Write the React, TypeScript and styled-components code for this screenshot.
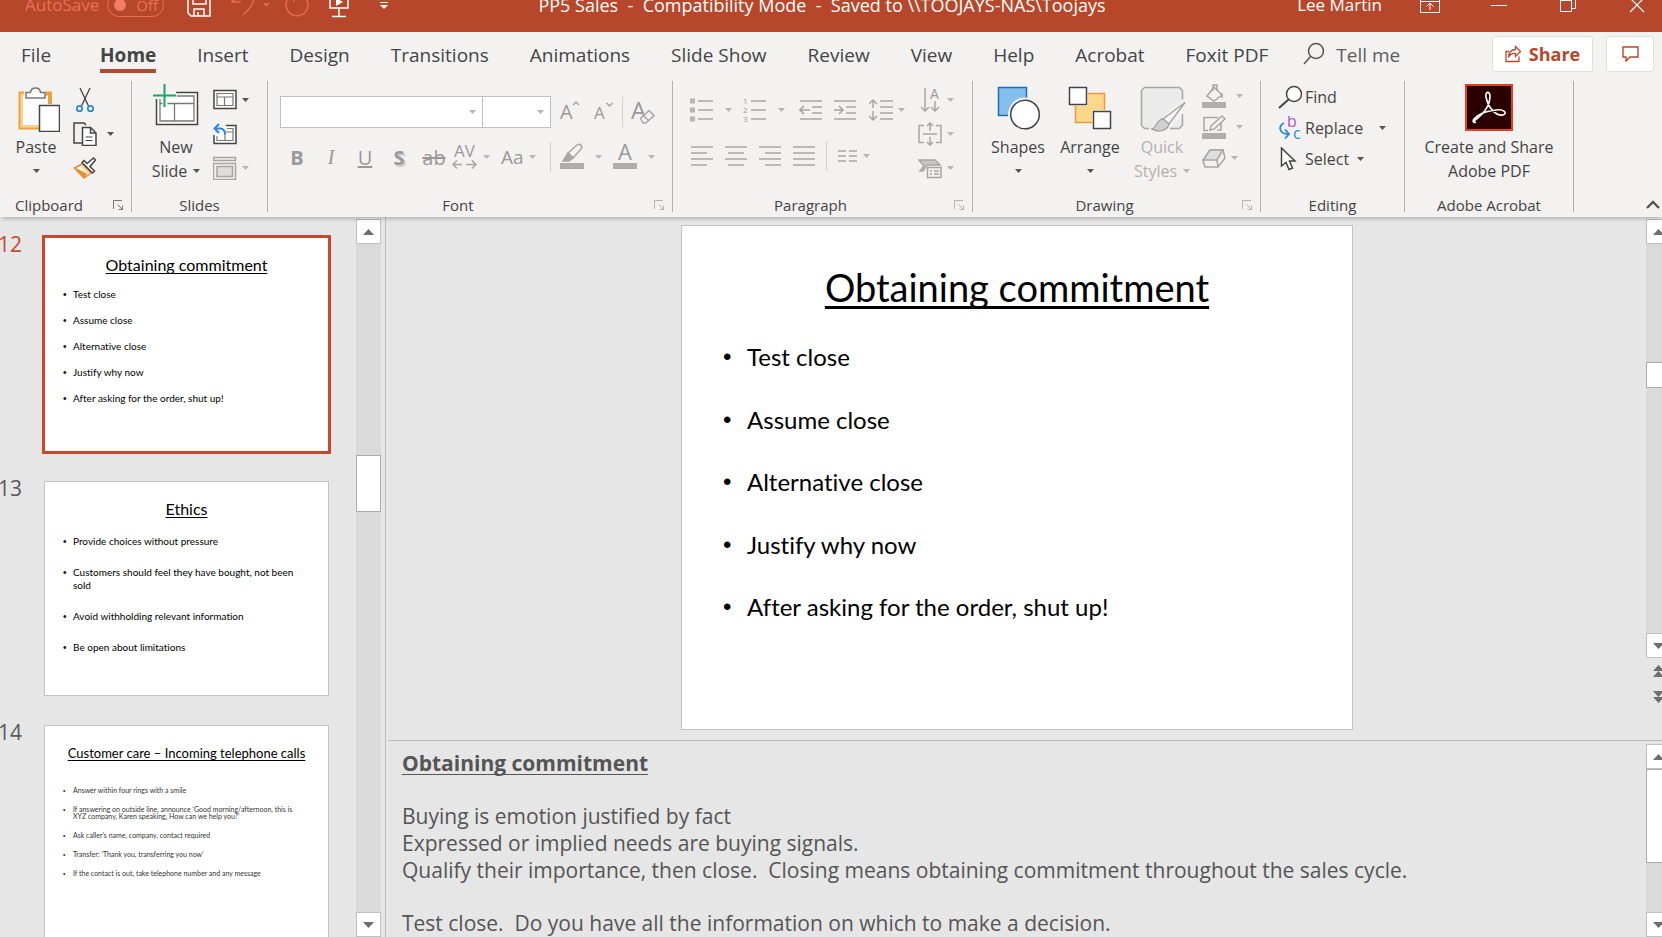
import React from 'react';
import styled, { createGlobalStyle, css } from 'styled-components';

const ui = '"Open Sans", "Noto Sans", sans-serif';
const slideFont = 'Lato, "Open Sans", sans-serif';
const brand = '#b7472a';
const ink = '#444444';
const dim = '#a6a6a6';

const GlobalStyle = createGlobalStyle`
  *, *::before, *::after { box-sizing: border-box; }
  body { margin: 0; font-family: ${ui}; color: ${ink}; background: #e6e6e6; }
  button, input, select { font: inherit; color: inherit; }
  button { border: 0; padding: 0; background: none; cursor: pointer; }
  button:disabled { cursor: default; }
  svg { display: block; flex: none; }
  h1, h2, p, ul { margin: 0; padding: 0; }
`;

const Window = styled.div`
  display: flex;
  flex-direction: column;
  height: 100vh;
  overflow: hidden;
`;

/* ---------- title bar ---------- */

const TitleBar = styled.header`
  display: flex;
  align-items: flex-end;
  height: 32px;
  overflow: hidden;
  background: ${brand};
  color: #fff;
`;

const TitleRow = styled.div`
  flex: 1;
  display: grid;
  grid-template-columns: 1fr auto 1fr;
  align-items: center;
  height: 54px;
  line-height: 24px;
`;

const QuickAccess = styled.div`
  display: flex;
  align-items: center;
  padding-left: 25px;
`;

const AutoSave = styled.label`
  display: flex;
  align-items: center;
  gap: 8px;
  margin-right: 23px;
  font-size: 17px;
  color: #e8705a;
`;

const Toggle = styled.span`
  display: flex;
  align-items: center;
  gap: 10px;
  width: 57px;
  height: 24px;
  padding-left: 6px;
  border: 1px solid #e8705a;
  border-radius: 12px;
  font-size: 15px;
`;

const ToggleInput = styled.input`
  appearance: none;
  width: 12px;
  height: 12px;
  margin: 0;
  border-radius: 50%;
  background: #f47c66;
`;

const BarButton = styled.button<{ $gap?: number }>`
  display: flex;
  align-items: center;
  justify-content: center;
  gap: 8px;
  height: 32px;
  margin-right: ${(p) => p.$gap ?? 0}px;
`;

const DocTitle = styled.h1`
  padding-right: 18px;
  font-size: 18px;
  font-weight: 400;
  white-space: pre;
`;

const WindowControls = styled.div`
  display: flex;
  align-items: center;
  justify-content: flex-end;
  padding-right: 17px;
  font-size: 17px;
`;

/* ---------- tabs ---------- */

const TabBar = styled.nav`
  display: flex;
  align-items: center;
  height: 44px;
  padding: 0 8px 0 21px;
  background: #f3f2f1;
`;

const Tabs = styled.div`
  display: flex;
  gap: 41px;
  font-size: 19px;
  line-height: 26px;
`;

const Tab = styled.button<{ $active?: boolean }>`
  height: 38px;
  border-bottom: 4px solid transparent;
  padding-top: 5px;
  white-space: nowrap;
  ${(p) =>
    p.$active &&
    css`
      border-color: ${brand};
      font-weight: 700;
    `}
`;

const FirstTab = styled(Tab)`
  margin-right: 8px;
`;

const TellMe = styled.label`
  display: flex;
  align-items: center;
  gap: 11px;
  margin-left: 35px;
  flex: 1;
`;

const TellMeInput = styled.input`
  width: 90px;
  border: 0;
  padding: 2px 0 0;
  background: transparent;
  font-size: 19px;
  outline: none;
  &::placeholder { color: #5c5c5c; opacity: 1; }
`;

const TabActions = styled.div`
  display: flex;
  gap: 13px;
`;

const ActionButton = styled.button<{ $w: number }>`
  display: flex;
  align-items: center;
  justify-content: center;
  gap: 7px;
  width: ${(p) => p.$w}px;
  height: 36px;
  border: 1px solid #e1dfdd;
  border-radius: 3px;
  background: #fff;
  color: ${brand};
  font-size: 18px;
  font-weight: 700;
`;

/* ---------- ribbon ---------- */

const Ribbon = styled.section`
  position: relative;
  z-index: 1;
  display: flex;
  height: 141px;
  padding: 5px 0;
  background: #f3f2f1;
  box-shadow: 0 4px 4px -2px rgba(0, 0, 0, 0.22);
`;

const Group = styled.section<{ $w: number }>`
  display: flex;
  flex-direction: column;
  flex: none;
  width: ${(p) => p.$w}px;
  border-right: 1px solid #b3b0ad;
`;

const GroupBody = styled.div<{ $left?: number; $center?: boolean }>`
  display: flex;
  flex: 1;
  min-height: 0;
  padding-left: ${(p) => p.$left ?? 0}px;
  justify-content: ${(p) => (p.$center ? 'center' : 'flex-start')};
`;

const GroupFooter = styled.div`
  display: flex;
  align-items: center;
  height: 14px;
`;

const GroupLabel = styled.h2`
  flex: 1;
  text-align: center;
  font-size: 15px;
  font-weight: 400;
  line-height: 14px;
`;

const LauncherButton = styled.button<{ $w: number }>`
  width: ${(p) => p.$w}px;
  display: flex;
  justify-content: flex-end;
  padding-right: 7px;
`;

const BigButton = styled.button<{ $w: number }>`
  display: flex;
  flex-direction: column;
  align-items: center;
  width: ${(p) => p.$w}px;
  padding-top: 3px;
  font-size: 16px;
  line-height: 24px;
  white-space: nowrap;
  &:disabled { color: #b3b0ad; }
`;

const BigIcon = styled.span`
  margin-bottom: 3px;
`;

const CaretLine = styled.span`
  display: flex;
  align-items: center;
  justify-content: center;
  gap: 6px;
  height: 24px;
`;

const SmallColumn = styled.div<{ $left: number; $top: number; $gap: number }>`
  display: flex;
  flex-direction: column;
  gap: ${(p) => p.$gap}px;
  margin-left: ${(p) => p.$left}px;
  padding-top: ${(p) => p.$top}px;
`;

const SmallButton = styled.button<{ $gap?: number }>`
  display: flex;
  align-items: center;
  gap: ${(p) => p.$gap ?? 5}px;
  height: 24px;
`;

const ToolRows = styled.div<{ $top: number; $gap: number }>`
  display: flex;
  flex-direction: column;
  gap: ${(p) => p.$gap}px;
  padding-top: ${(p) => p.$top}px;
`;

const ToolRow = styled.div`
  display: flex;
  align-items: center;
  height: 32px;
`;

const Tool = styled.button<{ $w: number }>`
  display: flex;
  align-items: center;
  justify-content: flex-start;
  width: ${(p) => p.$w}px;
  height: 32px;
  gap: 11px;
`;

const LetterTool = styled(Tool)`
  justify-content: center;
  font-size: 20px;
  color: #999;
`;

const TightTool = styled(Tool)`
  gap: 5px;
`;

const CaseTool = styled(TightTool)`
  font-size: 19px;
  color: #999;
`;

const FontSizeTools = styled.div`
  display: flex;
  padding-left: 9px;
`;

const SerifItalic = styled.i`
  font-family: "Liberation Serif", serif;
`;

const Shadowed = styled.b`
  text-shadow: 2px 2px 1px #ccc;
`;

const Spacer = styled.span`
  width: 11px;
`;

const Divider = styled.span<{ $gap: number }>`
  width: 1px;
  height: 30px;
  margin: 0 ${(p) => p.$gap}px;
  background: #d2d0ce;
`;

const SelectBox = styled.label<{ $w: number }>`
  display: flex;
  align-items: center;
  width: ${(p) => p.$w}px;
  height: 32px;
  padding-right: 6px;
  border: 1px solid #c0c0c0;
  background: #fff;
  & + & { margin-left: -1px; }
`;

const Select = styled.select`
  appearance: none;
  flex: 1;
  min-width: 0;
  height: 28px;
  border: 0;
  background: transparent;
`;

const EditButton = styled.button`
  display: flex;
  align-items: center;
  gap: 3px;
  height: 31px;
  font-size: 16px;
`;

const EditCaret = styled.span<{ $left: number }>`
  margin-left: ${(p) => p.$left}px;
`;

const CollapseButton = styled.button`
  margin-left: auto;
  align-self: flex-end;
  padding: 0 2px 3px 0;
`;

/* ---------- workspace ---------- */

const Workspace = styled.main`
  display: flex;
  flex: 1;
  min-height: 0;
`;

const ThumbPane = styled.aside`
  display: flex;
  justify-content: space-between;
  width: 386px;
  padding-right: 4px;
  border-right: 1px solid #bdbdbd;
`;

const ThumbList = styled.ul`
  display: flex;
  flex-direction: column;
  gap: 29px;
  padding-top: 20px;
  overflow: hidden;
  width: 340px;
  list-style: none;
`;

const ThumbItem = styled.li<{ $selected?: boolean }>`
  display: grid;
  grid-template-columns: 44px 285px;
  font-size: 21px;
  line-height: 14px;
  color: ${(p) => (p.$selected ? '#c8472f' : '#5a5a5a')};
`;

const ThumbNumber = styled.span`
  width: 22px;
  direction: rtl;
`;

const Thumb = styled.article<{ $selected?: boolean }>`
  height: 215px;
  padding: 16px 14px 0;
  border: 1px solid #c2c2c2;
  background: #fff;
  color: #000;
  font-family: ${slideFont};
  font-variant-ligatures: none;
  ${(p) =>
    p.$selected &&
    css`
      outline: 3px solid #c8472f;
      outline-offset: -1px;
    `}
`;

const ThumbTitle = styled.h2<{ $small?: boolean }>`
  text-align: center;
  white-space: nowrap;
  font-weight: 400;
  font-size: ${(p) => (p.$small ? 13 : 16)}px;
  line-height: 22px;
  text-decoration: underline;
  text-decoration-thickness: 1px;
  text-underline-offset: 2px;
  text-decoration-skip-ink: none;
`;

const ThumbBullets = styled.ul<{ $small?: boolean; $gap: number; $top: number }>`
  display: flex;
  flex-direction: column;
  gap: ${(p) => p.$gap}px;
  padding-top: ${(p) => p.$top}px;
  list-style: none;
  font-size: ${(p) => (p.$small ? 7 : 10)}px;
  line-height: ${(p) => (p.$small ? 7 : 13)}px;
  color: ${(p) => (p.$small ? '#333' : '#000')};
`;

const Bullet = styled.li<{ $indent: number; $lead?: number }>`
  display: grid;
  grid-template-columns: ${(p) => p.$indent}px 1fr;
  padding-left: ${(p) => p.$lead ?? 0}px;
  white-space: pre-line;
  &::before {
    content: '•';
    font-family: "Liberation Sans", sans-serif;
  }
`;

const ScrollBar = styled.div<{ $top?: number }>`
  display: flex;
  flex-direction: column;
  flex: none;
  width: 25px;
  padding-top: ${(p) => p.$top ?? 2}px;
`;

const ScrollButton = styled.button`
  display: flex;
  align-items: center;
  justify-content: center;
  flex: none;
  height: 25px;
  border: 1px solid #c0c0c0;
  background: #fff;
`;

const Track = styled.div<{ $before: number }>`
  flex: 1;
  min-height: 0;
  padding-top: ${(p) => p.$before}px;
  background: #dadada;
`;

const Handle = styled.div<{ $h: number }>`
  height: ${(p) => p.$h}px;
  border: 1px solid #ababab;
  background: #fff;
`;

const JumpButton = styled.button`
  display: flex;
  align-items: center;
  justify-content: center;
  height: 26px;
`;

const JumpGroup = styled.div`
  display: flex;
  flex-direction: column;
  padding-bottom: 30px;
`;

const Editor = styled.section`
  display: flex;
  flex-direction: column;
  flex: 1;
  min-width: 0;
  padding-left: 2px;
`;

const Pane = styled.div`
  display: grid;
  grid-template-columns: 1fr 16px;
  overflow: hidden;
`;

const NotesPane = styled(Pane)`
  flex: 1;
  min-height: 0;
  border-top: 1px solid #b8b8b8;
`;

const Canvas = styled.div`
  display: flex;
  justify-content: center;
  padding: 8px 0 10px;
`;

const Clip = styled.div`
  display: flex;
  overflow: hidden;
  min-height: 0;
`;

const Slide = styled.article`
  width: 672px;
  height: 505px;
  padding: 37px 41px 0;
  border: 1px solid #c2c2c2;
  background: #fff;
  color: #000;
  font-family: ${slideFont};
  font-variant-ligatures: none;
`;

const SlideTitle = styled.h1`
  text-align: center;
  font-size: 38px;
  font-weight: 400;
  line-height: 48px;
  text-decoration: underline;
  text-decoration-thickness: 3px;
  text-underline-offset: 4px;
  text-decoration-skip-ink: none;
`;

const SlideBullets = styled.ul`
  display: flex;
  flex-direction: column;
  justify-content: space-between;
  height: 280px;
  margin-top: 31px;
  list-style: none;
  font-size: 24px;
  line-height: 30px;
`;

const Notes = styled.div`
  display: flex;
  flex-direction: column;
  gap: 26px;
  padding: 9px 0 0 14px;
  overflow: hidden;
  font-size: 21px;
  line-height: 27px;
  color: #555;
  white-space: pre-wrap;
`;

const NotesTitle = styled.h2`
  font-size: 21px;
  font-weight: 700;
  text-decoration: underline;
  text-decoration-thickness: 1px;
  text-underline-offset: 3px;
  text-decoration-skip-ink: none;
`;

/* ---------- icons ---------- */

const Caret = ({ c = '#555' }: { c?: string }) => (
  <svg width="7" height="4" viewBox="0 0 7 4"><path d="M0 0h7L3.5 4z" fill={c} /></svg>
);
const Down = () => <Caret c="#b5b5b5" />;

const Svg = ({ w = 24, h = 24, s = dim, sw = 1.5, children }: { w?: number; h?: number; s?: string; sw?: number; children: React.ReactNode }) => (
  <svg width={w} height={h} viewBox={`0 0 ${w} ${h}`} fill="none" stroke={s} strokeWidth={sw} aria-hidden="true">{children}</svg>
);

const Launcher = ({ c = '#b5b5b5', w = 24 }: { c?: string; w?: number }) => (
  <LauncherButton $w={w} aria-label="More options">
    <Svg w={11} h={11} s={c} sw={1}><path d="M.5 9V.5H9M4.5 4.5l5 5M9.5 5.5v4h-4" /></Svg>
  </LauncherButton>
);

const SaveIcon = () => (
  <Svg w={24} h={32} s="#fff"><path d="M1 4h22v23H4l-3-3zM6 4v11h13V4M7 27v-7h10v7M11 23v4" /></Svg>
);
const UndoIcon = () => (
  <Svg w={24} h={32} s="#e06a52"><path d="M1 4v9h9M1 13L9 6c6-4 14 0 13 7-1 5-6 9-10 13" /></Svg>
);
const RepeatIcon = () => (
  <Svg w={24} h={32} s="#e06a52"><path d="M17 6a11 11 0 1 1-10 0M9 1v12" /></Svg>
);
const ShowIcon = () => (
  <Svg w={22} h={32} s="#fff"><path d="M0 6h22M2 6v13h18V6M11 19v8M4 27.500h14" /><path d="M8 9l7 4-7 4z" fill="#fff" stroke="none" /></Svg>
);
const CustomizeIcon = () => (
  <Svg w={8} h={14} s="#fff" sw={1}><path d="M0 4.500h8" /><path d="M0 7h8l-4 4z" fill="#fff" stroke="none" /></Svg>
);
const DisplayIcon = () => <Svg w={20} h={16} s="#fff" sw={1}><path d="M.5.5h19v15H.5zM.5 4.500h19M10 13V6.500M6.500 9.500L10 6l3.500 3.500" /></Svg>;
const MinIcon = () => <Svg w={16} h={16} s="#fff" sw={1}><path d="M0 8.500h16" /></Svg>;
const RestoreIcon = () => <Svg w={16} h={16} s="#fff" sw={1}><path d="M.5 3.500h11v11H.5zM3.500 3V.5h12v11h-4" /></Svg>;
const CloseIcon = () => <Svg w={16} h={16} s="#fff" sw={1.2}><path d="M1 1l14 14M15 1L1 15" /></Svg>;

const SearchIcon = () => <Svg w={22} h={24} s="#555"><circle cx="13" cy="9" r="7.500" /><path d="M7.500 14.500L1 22" /></Svg>;
const ShareIcon = () => (
  <Svg w={17} h={18} s={brand} sw={1.3}><path d="M4 6.500H1v10h13v-5M10.500 1.500l5 5-5 5v-3c-4-.3-6 1.500-7 4 .3-5 3-8 7-8z" /></Svg>
);
const CommentIcon = () => <Svg w={17} h={16} s={brand} sw={1.4}><path d="M1 1h15v10H8l-4 4v-4H1z" /></Svg>;

const PasteIcon = () => (
  <Svg w={48} h={48} s="#444">
    <path d="M12 9.500H8.500v34H27M34 9.500h4V20" stroke="#e8a33d" strokeWidth="4" />
    <path d="M12 10.500H9.500v32H27" stroke="#fbd88a" strokeWidth="2" />
    <path d="M11 12h25v10H27v19H11z" fill="#fcfcfc" stroke="none" />
    <path d="M14 14V8.500h4.500c.5-6 9.500-6 10 0H33V14z" fill="#fff" stroke="#777" />
    <path d="M27.500 21.500h20v26h-20z" fill="#fff" />
  </Svg>
);
const CutIcon = () => (
  <Svg s="#444" sw={1.3}>
    <path d="M7 0l8.500 18M17 0L8.500 18" /><g stroke="#2b88d8" strokeWidth="1.7"><circle cx="6.500" cy="20.500" r="2.700" /><circle cx="17.500" cy="20.500" r="2.700" /></g>
  </Svg>
);
const CopyIcon = () => (
  <Svg s="#444">
    <path d="M9 21H1V1h10l2 2" /><path d="M9.500 5.500h8l5.500 5.500v12.500H9.500z" fill="#fff" /><path d="M17.500 5.500V11H23" /><path d="M12.500 15h7M12.500 18.500h7" strokeWidth="1" />
  </Svg>
);
const PainterIcon = () => (
  <Svg s="#444">
    <path d="M9 8L1.500 12 11 22l7-5z" fill="#fff" stroke="#e8833a" /><path d="M3 13l8 8 2-3z" fill="#ed8b2e" stroke="#ed8b2e" /><path d="M8 11l7 7 2-1-8-8z" fill="#fbd9a0" stroke="none" />
    <path d="M9 6.500L19.500 17l2-2-4.500-4.500 5.500-6.500-2-2-6.500 5.500L11 4.500z" fill="#fff" />
  </Svg>
);
const NewSlideIcon = () => (
  <Svg w={48} h={48} s="#444">
    <path d="M4.500 15v25.500h41v-32H24" fill="#fff" /><path d="M8 15v22h34V12H24M8 19.500h34M22.500 19.500V37" stroke="#777" strokeWidth="1.300" />
    <path d="M13 0v23M1 11.500h24" stroke="#f3f2f1" strokeWidth="5" /><path d="M12.500 0v23M1 11.500h23" stroke="#21a366" strokeWidth="2" />
  </Svg>
);
const LayoutIcon = () => (
  <Svg s="#444"><path d="M1 2.500h22v18H1z" fill="#fff" /><path d="M4 5.500h16v12H4zM4 9h16M11.500 9v8.500" stroke="#777" strokeWidth="1.200" /></Svg>
);
const ResetIcon = () => (
  <Svg s="#444"><path d="M13 3.500h10v18H1V13" fill="#fff" /><path d="M14 6.500h6v12H4V14M12 10h8M12 12v6" stroke="#777" strokeWidth="1.200" /><path d="M6 2L1.500 6.500 6 11M2 6.500h5c4 0 5 3 5 6" stroke="#2b88d8" strokeWidth="2" /></Svg>
);
const SectionIcon = () => (
  <Svg><path d="M.5 1.500h22v3H.5zM.5 7.500h22v16H.5z" /><path d="M4 10.500h15.500v10H4z" fill="#ddd" /></Svg>
);

const Glyph = styled.text`
  font-family: ${ui};
  fill: #999;
  stroke: none;
`;

const GrowIcon = () => <Svg><Glyph x="0" y="19" fontSize="20">A</Glyph><path d="M13 5l3-3 3 3" /></Svg>;
const ShrinkIcon = () => <Svg><Glyph x="0" y="19" fontSize="17">A</Glyph><path d="M12.500 3l3 3 3-3" /></Svg>;
const ClearIcon = () => <Svg w={26} h={26}><Glyph x="0" y="20" fontSize="24">A</Glyph><path d="M9.500 19.500l8.500-8 5 5-8 7.500h-3zM12.500 16.500l5 5" fill="#f3f2f1" /></Svg>;
const SpacingIcon = () => <Svg w={26} h={26}><Glyph x="2" y="13" fontSize="17">AV</Glyph><path d="M1 20.500h9M14 20.500h10M5 16.500l-4 4 4 4M20 16.500l4 4-4 4" /></Svg>;
const HighlightIcon = () => <Svg w={24} h={28}><path d="M0 23h24" strokeWidth="6" stroke="#b0aeac" /><path d="M8 10l9-8c3-2 6 1 4 4l-8 9z" /><path d="M8 10l5 5-4 3H3z" fill={dim} /></Svg>;
const FontColorIcon = () => <Svg w={24} h={28}><path d="M0 23h24" strokeWidth="6" stroke="#b0aeac" /><Glyph x="5" y="17" fontSize="22">A</Glyph></Svg>;

const BulletsIcon = () => <Svg><path d="M8 3h15M8 12h15M8 21h15" /><path d="M0 3h5M0 12h5M0 21h5" strokeWidth="5" stroke="#b5b5b5" /></Svg>;
const NumbersIcon = () => <Svg><path d="M8 3h15M8 12h15M8 21h15" /><Glyph x="0" y="6" fontSize="8">1</Glyph><Glyph x="0" y="15" fontSize="8">2</Glyph><Glyph x="0" y="24" fontSize="8">3</Glyph></Svg>;
const OutdentIcon = () => <Svg><path d="M1 3h22M13 9h10M13 15h10M1 21h22M1 12h10M5 8l-4 4 4 4" strokeWidth="1.700" /></Svg>;
const IndentIcon = () => <Svg><path d="M1 3h22M13 9h10M13 15h10M1 21h22M1 12h9M6 8l4 4-4 4" strokeWidth="1.700" /></Svg>;
const LineSpacingIcon = () => <Svg><path d="M11 3h13M11 9h13M11 15h13M11 21h13" strokeWidth="1.700" /><path d="M4 2v8M4 13v9M0 6l4-4 4 4M0 18l4 4 4-4" /></Svg>;
const AlignIcon = ({ d }: { d: string }) => <Svg><path d={d} strokeWidth="1.700" /></Svg>;
const ColumnsIcon = () => <Svg w={20} h={24}><path d="M0 7h8M0 12h8M0 17h8M11 7h8M11 12h8M11 17h8" /></Svg>;
const SortIcon = () => <Svg><path d="M7 0v23M3 19l4 4 4-4M17 13v10M13 19l4 4 4-4" /><Glyph x="12" y="11" fontSize="14">A</Glyph></Svg>;
const AlignTextIcon = () => <Svg><path d="M6 3.500H1v17h5M18 3.500h5v17h-5M5 12h14M12 1v8M9 4l3-3 3 3M12 15v8M9 20l3 3 3-3" /></Svg>;
const SmartArtIcon = () => <Svg><path d="M1 4h16l5 5H9l-4 6H2l4-5z" fill="#c8c6c4" /><path d="M9.500 11.500H23v10H9.500z" fill="#f3f2f1" /><path d="M12 15h2M16 15h5M12 18h2M16 18h5" /></Svg>;

const ShapesIcon = () => (
  <Svg w={48} h={48} s="#444"><path d="M4.500 3.500h28v28h-28z" fill="#83beec" stroke="#1f6fb5" /><circle cx="31" cy="30.500" r="17" fill="#f3f2f1" stroke="none" /><circle cx="31" cy="30.500" r="14.300" fill="#fff" /></Svg>
);
const ArrangeIcon = () => (
  <Svg w={48} h={48} s="#444"><path d="M9.500 9.500h29v29h-29z" fill="#fbd88a" stroke="#ec9a3c" /><path d="M2 2h20v20H2zM26 26h20v20H26z" fill="#f3f2f1" stroke="none" /><path d="M3.500 3.500h17v17h-17zM27.500 27.500h17v17h-17z" fill="#fff" /></Svg>
);
const QuickStylesIcon = () => (
  <Svg w={48} h={48}><path d="M11 44.500H6.500l-3-3v-35l3-3h35l3 3v9M44.500 30v11l-3 3.500H32" fill="#ebebeb" /><path d="M47 18.500L31 40l-6-5z" fill="#f8f8f8" /><path d="M25 35c-5-1-6 8-11 10 5 3 15 3 17-5z" fill="#d0d0d0" /></Svg>
);
const FillIcon = () => <Svg><path d="M0 21h24" strokeWidth="6" stroke="#b0aeac" /><path d="M12 3l8 8-8 6-7-5zM11 7V1h4v6M20 9v5" /></Svg>;
const OutlineIcon = () => <Svg><path d="M0 21h24" strokeWidth="6" stroke="#b0aeac" /><path d="M16 2.500H2v13h4M19 8v7h-4M9 11l11-10 3 3-11 10-4 1z" /></Svg>;
const EffectsIcon = () => <Svg><path d="M8 4h13l2 8-7 9H3L1 15z" /><path d="M8 4h13l-6 10H1z" fill="#ddd" /><path d="M15 14l1 7" /></Svg>;

const FindIcon = () => <Svg s="#444"><circle cx="16" cy="9" r="7.500" fill="#fff" /><path d="M10.500 14.500L1 23" strokeWidth="2" /></Svg>;
const ReplaceIcon = () => (
  <Svg s="#2b88d8" sw={1.8}><path d="M6 7c-6 3-5 11 4 11M7 13.500l4 4.500-4 4.500" /><text x="9" y="11" fontSize="16" fill="#b14fc5" stroke="none">b</text><text x="15" y="23" fontSize="16" fill="#2b88d8" stroke="none">c</text></Svg>
);
const SelectIcon = () => <Svg s="#444"><path d="M3.500 1v18l4.500-3.500 3 7 3.500-1.500-3-7H17z" fill="#fff" /></Svg>;

const AcrobatIcon = () => (
  <Svg w={48} h={48} s="#fff"><path d="M1 1h46v45H1z" fill="#2b0000" stroke="#e2401f" strokeWidth="2" /><path d="M9 37c4-3 16-11 16-25 0-5-5-5-4 1 2 10 9 19 17 18 5-2 1-6-7-5-9 1-18 4-22 9-2 3 0 4 2 3" strokeWidth="1.600" /></Svg>
);
const ChevronUp = () => <Svg w={14} h={9} s="#555" sw={2.4}><path d="M1 8l6-6 6 6" /></Svg>;
const Arrow = ({ up }: { up?: boolean }) => <svg width="11" height="6" viewBox="0 0 11 6"><path d={up ? 'M0 6h11L5.500 0z' : 'M0 0h11L5.500 6z'} fill="#6d6d6d" /></svg>;
const DoubleArrow = ({ up }: { up?: boolean }) => <svg width="11" height="13" viewBox="0 0 11 13"><path d={up ? 'M0 6h11L5.500 0zM0 12h11L5.500 6z' : 'M0 0h11L5.500 6zM0 6h11L5.500 12z'} fill="#6d6d6d" /></svg>;

/* ---------- content ---------- */

const tabNames = ['Home', 'Insert', 'Design', 'Transitions', 'Animations', 'Slide Show', 'Review', 'View', 'Help', 'Acrobat', 'Foxit PDF'];

const commitment = ['Test close', 'Assume close', 'Alternative close', 'Justify why now', 'After asking for the order, shut up!'];

const thumbs = [
  { n: 12, title: 'Obtaining commitment', gap: 13, top: 12, bullets: commitment, selected: true },
  {
    n: 13, title: 'Ethics', gap: 18, top: 15,
    bullets: ['Provide choices without pressure', 'Customers should feel they have bought, not been\nsold', 'Avoid withholding relevant information', 'Be open about limitations'],
  },
  {
    n: 14, title: 'Customer care – Incoming telephone calls', gap: 12, top: 23, small: true,
    bullets: ['Answer within four rings with a smile', 'If answering on outside line, announce ‘Good morning/afternoon, this is\nXYZ company, Karen speaking, How can we help you?’', 'Ask caller’s name, company, contact required', 'Transfer: ‘Thank you, transferring you now’', 'If the contact is out, take telephone number and any message'],
  },
];

const alignments = [
  ['Align left', 'M1 3h22M1 9h16M1 15h22M1 21h16'],
  ['Center', 'M1 3h22M4 9h16M1 15h22M4 21h16'],
  ['Align right', 'M1 3h22M7 9h16M1 15h22M7 21h16'],
  ['Justify', 'M1 3h22M1 9h22M1 15h22M1 21h22'],
];

function RibbonBar() {
  return (
    <Ribbon aria-label="Ribbon">
      <Group $w={132}>
        <GroupBody $left={10}>
          <BigButton $w={52}><BigIcon><PasteIcon /></BigIcon>Paste<CaretLine><Caret /></CaretLine></BigButton>
          <SmallColumn $left={11} $top={7} $gap={10}>
            <SmallButton aria-label="Cut"><CutIcon /></SmallButton>
            <SmallButton aria-label="Copy" $gap={10}><CopyIcon /><Caret /></SmallButton>
            <SmallButton aria-label="Format painter"><PainterIcon /></SmallButton>
          </SmallColumn>
        </GroupBody>
        <GroupFooter><GroupLabel>Clipboard</GroupLabel><Launcher c="#777" w={33} /></GroupFooter>
      </Group>

      <Group $w={136}>
        <GroupBody $left={18}>
          <BigButton $w={52}><BigIcon><NewSlideIcon /></BigIcon>New<CaretLine>Slide<Caret /></CaretLine></BigButton>
          <SmallColumn $left={11} $top={7} $gap={10}>
            <SmallButton aria-label="Layout"><LayoutIcon /><Caret /></SmallButton>
            <SmallButton aria-label="Reset"><ResetIcon /></SmallButton>
            <SmallButton aria-label="Section" disabled><SectionIcon /><Down /></SmallButton>
          </SmallColumn>
        </GroupBody>
        <GroupFooter><GroupLabel>Slides</GroupLabel></GroupFooter>
      </Group>

      <Group $w={405}>
        <GroupBody $left={12}>
          <ToolRows $top={15} $gap={13}>
            <ToolRow>
              <SelectBox $w={203}><Select aria-label="Font" disabled /><Down /></SelectBox>
              <SelectBox $w={69}><Select aria-label="Font size" disabled /><Down /></SelectBox>
              <FontSizeTools>
                <Tool $w={34} aria-label="Increase font size" disabled><GrowIcon /></Tool>
                <Tool $w={20} aria-label="Decrease font size" disabled><ShrinkIcon /></Tool>
              </FontSizeTools>
              <Divider $gap={8} />
              <Tool $w={26} aria-label="Clear formatting" disabled><ClearIcon /></Tool>
            </ToolRow>
            <ToolRow>
              <LetterTool $w={34} aria-label="Bold" disabled><b>B</b></LetterTool>
              <LetterTool $w={34} aria-label="Italic" disabled><SerifItalic>I</SerifItalic></LetterTool>
              <LetterTool $w={34} aria-label="Underline" disabled><u>U</u></LetterTool>
              <LetterTool $w={34} aria-label="Shadow" disabled><Shadowed>S</Shadowed></LetterTool>
              <LetterTool $w={36} aria-label="Strikethrough" disabled><s>ab</s></LetterTool>
              <TightTool $w={49} aria-label="Character spacing" disabled><SpacingIcon /><Down /></TightTool>
              <CaseTool $w={40} aria-label="Change case" disabled>Aa<Down /></CaseTool>
              <Divider $gap={9} />
              <Tool $w={53} aria-label="Highlight" disabled><HighlightIcon /><Down /></Tool>
              <Tool $w={53} aria-label="Font color" disabled><FontColorIcon /><Down /></Tool>
            </ToolRow>
          </ToolRows>
        </GroupBody>
        <GroupFooter><GroupLabel>Font</GroupLabel><Launcher /></GroupFooter>
      </Group>

      <Group $w={300}>
        <GroupBody $left={17}>
          <ToolRows $top={13} $gap={14}>
            <ToolRow>
              <Tool $w={53} aria-label="Bullets" disabled><BulletsIcon /><Down /></Tool>
              <Tool $w={56} aria-label="Numbering" disabled><NumbersIcon /><Down /></Tool>
              <Tool $w={34} aria-label="Decrease indent" disabled><OutdentIcon /></Tool>
              <Tool $w={36} aria-label="Increase indent" disabled><IndentIcon /></Tool>
              <TightTool $w={49} aria-label="Line spacing" disabled><LineSpacingIcon /><Down /></TightTool>
            </ToolRow>
            <ToolRow>
              {alignments.map(([name, d]) => (
                <Tool key={name} $w={34} aria-label={name} disabled><AlignIcon d={d} /></Tool>
              ))}
              <Divider $gap={0} />
              <Spacer />
              <TightTool $w={38} aria-label="Columns" disabled><ColumnsIcon /><Down /></TightTool>
            </ToolRow>
          </ToolRows>
          <SmallColumn $left={0} $top={7} $gap={10}>
            <SmallButton aria-label="Text direction" disabled><SortIcon /><Down /></SmallButton>
            <SmallButton aria-label="Align text" disabled><AlignTextIcon /><Down /></SmallButton>
            <SmallButton aria-label="Convert to SmartArt" disabled><SmartArtIcon /><Down /></SmallButton>
          </SmallColumn>
        </GroupBody>
        <GroupFooter><GroupLabel>Paragraph</GroupLabel><Launcher /></GroupFooter>
      </Group>

      <Group $w={288}>
        <GroupBody $left={9}>
          <BigButton $w={72}><BigIcon><ShapesIcon /></BigIcon>Shapes<CaretLine><Caret /></CaretLine></BigButton>
          <BigButton $w={72}><BigIcon><ArrangeIcon /></BigIcon>Arrange<CaretLine><Caret /></CaretLine></BigButton>
          <BigButton $w={72} disabled><BigIcon><QuickStylesIcon /></BigIcon>Quick<CaretLine>Styles<Down /></CaretLine></BigButton>
          <SmallColumn $left={4} $top={3} $gap={7}>
            <SmallButton aria-label="Shape fill" $gap={10} disabled><FillIcon /><Down /></SmallButton>
            <SmallButton aria-label="Shape outline" $gap={10} disabled><OutlineIcon /><Down /></SmallButton>
            <SmallButton aria-label="Shape effects" disabled><EffectsIcon /><Down /></SmallButton>
          </SmallColumn>
        </GroupBody>
        <GroupFooter><GroupLabel>Drawing</GroupLabel><Launcher /></GroupFooter>
      </Group>

      <Group $w={144}>
        <GroupBody $left={17}>
          <div>
            <EditButton><FindIcon />Find</EditButton>
            <EditButton><ReplaceIcon />Replace<EditCaret $left={13}><Caret /></EditCaret></EditButton>
            <EditButton><SelectIcon />Select<EditCaret $left={5}><Caret /></EditCaret></EditButton>
          </div>
        </GroupBody>
        <GroupFooter><GroupLabel>Editing</GroupLabel></GroupFooter>
      </Group>

      <Group $w={169}>
        <GroupBody $center>
          <BigButton $w={150}><BigIcon><AcrobatIcon /></BigIcon><span>Create and Share</span><span>Adobe PDF</span></BigButton>
        </GroupBody>
        <GroupFooter><GroupLabel>Adobe Acrobat</GroupLabel></GroupFooter>
      </Group>
      <CollapseButton aria-label="Collapse the ribbon"><ChevronUp /></CollapseButton>
    </Ribbon>
  );
}

export default function App() {
  return (
    <Window>
      <GlobalStyle />
      <TitleBar>
        <TitleRow>
          <QuickAccess>
            <AutoSave>AutoSave<Toggle><ToggleInput type="checkbox" />Off</Toggle></AutoSave>
            <BarButton aria-label="Save" $gap={20}><SaveIcon /></BarButton>
            <BarButton aria-label="Undo" $gap={15}><UndoIcon /><Caret c="#e06a52" /></BarButton>
            <BarButton aria-label="Repeat" $gap={19}><RepeatIcon /></BarButton>
            <BarButton aria-label="Start slide show" $gap={30}><ShowIcon /></BarButton>
            <BarButton aria-label="Customize toolbar"><CustomizeIcon /></BarButton>
          </QuickAccess>
          <DocTitle>{'PP5 Sales  -  Compatibility Mode  -  Saved to \\\\TOOJAYS-NAS\\Toojays'}</DocTitle>
          <WindowControls>
            <BarButton $gap={38}>Lee Martin</BarButton>
            <BarButton aria-label="Ribbon display options" $gap={51}><DisplayIcon /></BarButton>
            <BarButton aria-label="Minimize" $gap={53}><MinIcon /></BarButton>
            <BarButton aria-label="Restore" $gap={53}><RestoreIcon /></BarButton>
            <BarButton aria-label="Close"><CloseIcon /></BarButton>
          </WindowControls>
        </TitleRow>
      </TitleBar>

      <TabBar>
        <Tabs>
          <FirstTab>File</FirstTab>
          {tabNames.map((name) => <Tab key={name} $active={name === 'Home'}>{name}</Tab>)}
        </Tabs>
        <TellMe><SearchIcon /><TellMeInput placeholder="Tell me" aria-label="Tell me" /></TellMe>
        <TabActions>
          <ActionButton $w={101}><ShareIcon />Share</ActionButton>
          <ActionButton $w={48} aria-label="Comments"><CommentIcon /></ActionButton>
        </TabActions>
      </TabBar>

      <RibbonBar />

      <Workspace>
        <ThumbPane>
          <ThumbList>
            {thumbs.map((t) => (
              <ThumbItem key={t.n} $selected={t.selected}>
                <ThumbNumber>{t.n}</ThumbNumber>
                <Thumb $selected={t.selected}>
                  <ThumbTitle $small={t.small}>{t.title}</ThumbTitle>
                  <ThumbBullets $small={t.small} $gap={t.gap} $top={t.top}>
                    {t.bullets.map((b) => <Bullet key={b} $lead={4} $indent={10}>{b}</Bullet>)}
                  </ThumbBullets>
                </Thumb>
              </ThumbItem>
            ))}
          </ThumbList>
          <ScrollBar>
            <ScrollButton aria-label="Scroll up"><Arrow up /></ScrollButton>
            <Track $before={211}><Handle $h={57} /></Track>
            <ScrollButton aria-label="Scroll down"><Arrow /></ScrollButton>
          </ScrollBar>
        </ThumbPane>

        <Editor>
          <Pane>
            <Canvas>
              <Slide>
                <SlideTitle>Obtaining commitment</SlideTitle>
                <SlideBullets>
                  {commitment.map((b) => <Bullet key={b} $indent={24}>{b}</Bullet>)}
                </SlideBullets>
              </Slide>
            </Canvas>
            <Clip>
              <ScrollBar>
                <ScrollButton aria-label="Scroll up"><Arrow up /></ScrollButton>
                <Track $before={118}><Handle $h={26} /></Track>
                <ScrollButton aria-label="Scroll down"><Arrow /></ScrollButton>
                <JumpGroup>
                  <JumpButton aria-label="Previous slide"><DoubleArrow up /></JumpButton>
                  <JumpButton aria-label="Next slide"><DoubleArrow /></JumpButton>
                </JumpGroup>
              </ScrollBar>
            </Clip>
          </Pane>

          <NotesPane>
            <Notes>
              <NotesTitle>Obtaining commitment</NotesTitle>
              <p>{'Buying is emotion justified by fact\nExpressed or implied needs are buying signals.\nQualify their importance, then close.  Closing means obtaining commitment throughout the sales cycle.'}</p>
              <p>{'Test close.  Do you have all the information on which to make a decision.'}</p>
            </Notes>
            <Clip>
              <ScrollBar $top={3}>
                <ScrollButton aria-label="Scroll notes up"><Arrow up /></ScrollButton>
                <Track $before={0}><Handle $h={94} /></Track>
                <ScrollButton aria-label="Scroll notes down"><Arrow /></ScrollButton>
              </ScrollBar>
            </Clip>
          </NotesPane>
        </Editor>
      </Workspace>
    </Window>
  );
}
